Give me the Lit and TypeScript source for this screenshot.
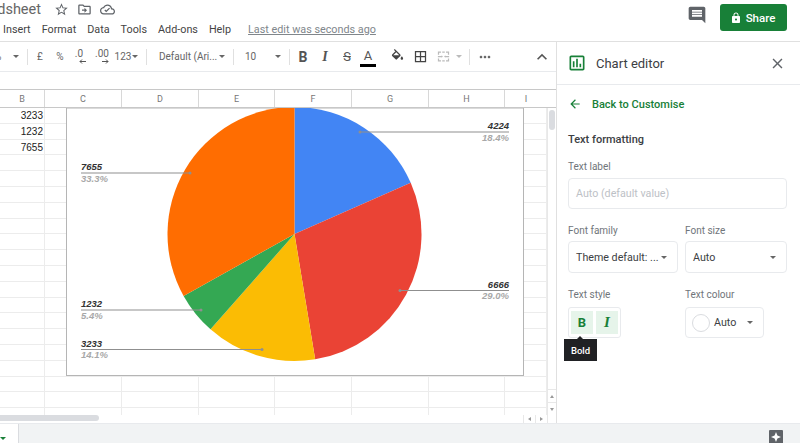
import { LitElement, css, html, svg } from "lit";
import { customElement } from "lit/decorators.js";

const COLUMNS: Array<[string, number]> = [
  ["B", 45],
  ["C", 77],
  ["D", 77],
  ["E", 76],
  ["F", 77],
  ["G", 77],
  ["H", 76],
  ["I", 42],
];

const VALUES = ["3233", "1232", "7655"];
const ROW_COUNT = 20;

const icon = (d: string, size: number, color: string) => html`<svg
  width=${size}
  height=${size}
  viewBox="0 0 24 24"
  fill=${color}
>
  <path d=${d}></path>
</svg>`;

const ICONS = {
  star: "M22 9.24l-7.19-.62L12 2 9.19 8.63 2 9.24l5.46 4.73L5.82 21 12 17.27 18.18 21l-1.63-7.03L22 9.24zM12 15.4l-3.76 2.27 1-4.28-3.32-2.88 4.38-.38L12 6.1l1.71 4.04 4.38.38-3.32 2.88 1 4.28L12 15.4z",
  folder:
    "M20 6h-8l-2-2H4c-1.1 0-2 .9-2 2v12c0 1.1.9 2 2 2h16c1.1 0 2-.9 2-2V8c0-1.1-.9-2-2-2zm0 12H4V6h5.17l2 2H20v10zm-8-1l4-4-4-4v3H8v2h4v3z",
  cloud:
    "M19.35 10.04C18.67 6.59 15.64 4 12 4 9.11 4 6.6 5.64 5.35 8.04 2.34 8.36 0 10.91 0 14c0 3.31 2.69 6 6 6h13c2.76 0 5-2.24 5-5 0-2.64-2.05-4.78-4.65-4.96zM19 18H6c-2.21 0-4-1.79-4-4 0-2.05 1.53-3.76 3.56-3.97l1.07-.11.5-.95C8.08 7.14 9.94 6 12 6c2.62 0 4.88 1.86 5.39 4.43l.3 1.5 1.53.11c1.56.1 2.78 1.41 2.78 2.96 0 1.65-1.35 3-3 3zm-9-1.5l-3-3 1.4-1.4 1.6 1.6 4.6-4.6 1.4 1.4z",
  comment:
    "M20 2H4c-1.1 0-2 .9-2 2v12c0 1.1.9 2 2 2h14l4 4V4c0-1.1-.9-2-2-2zm-2 12H6v-2h12v2zm0-3H6V9h12v2zm0-3H6V6h12v2z",
  lock: "M18 8h-1V6c0-2.76-2.24-5-5-5S7 3.24 7 6v2H6c-1.1 0-2 .9-2 2v10c0 1.1.9 2 2 2h12c1.1 0 2-.9 2-2V10c0-1.1-.9-2-2-2zm-6 9c-1.1 0-2-.9-2-2s.9-2 2-2 2 .9 2 2-.9 2-2 2zm3.1-9H8.9V6c0-1.71 1.39-3.1 3.1-3.1 1.71 0 3.1 1.39 3.1 3.1v2z",
  back: "M20 11H7.83l5.59-5.59L12 4l-8 8 8 8 1.41-1.41L7.83 13H20v-2z",
  close:
    "M19 6.41L17.59 5 12 10.59 6.41 5 5 6.41 10.59 12 5 17.59 6.41 19 12 13.41 17.59 19 19 17.59 13.41 12z",
  chevron: "M7.41 15.41L12 10.83l4.59 4.58L18 14l-6-6-6 6z",
  fill: "M16.56 8.94L7.62 0 6.21 1.41l2.38 2.38-5.15 5.15c-.59.59-.59 1.54 0 2.12l5.5 5.5c.29.29.68.44 1.06.44s.77-.15 1.06-.44l5.5-5.5c.59-.58.59-1.53 0-2.12zM5.21 10L10 5.21 14.79 10H5.21zM19 11.5s-2 2.17-2 3.5c0 1.1.9 2 2 2s2-.9 2-2c0-1.33-2-3.5-2-3.5z",
  borders:
    "M3 3v18h18V3H3zm8 16H5v-6h6v6zm0-8H5V5h6v6zm8 8h-6v-6h6v6zm0-8h-6V5h6v6z",
  merge:
    "M3 4h5v2H5v3H3zM10 4h4v2h-4zM16 4h5v5h-2V6h-3zM3 15h2v3h3v2H3zM10 18h4v2h-4zM19 15h2v5h-5v-2h3zM3 11h6v-1l2 2-2 2v-1H3zM21 11h-6v-1l-2 2 2 2v-1h6z",
  more: "M6 10c-1.1 0-2 .9-2 2s.9 2 2 2 2-.9 2-2-.9-2-2-2zm12 0c-1.1 0-2 .9-2 2s.9 2 2 2 2-.9 2-2-.9-2-2-2zm-6 0c-1.1 0-2 .9-2 2s.9 2 2 2 2-.9 2-2-.9-2-2-2z",
  chart:
    "M19 3H5c-1.1 0-2 .9-2 2v14c0 1.1.9 2 2 2h14c1.1 0 2-.9 2-2V5c0-1.1-.9-2-2-2zm0 16H5V5h14v14zM7 10h2v7H7zm4-3h2v10h-2zm4 6h2v4h-2z",
};

const CX = 294.5;
const CY = 234;
const R = 127;

const SLICES: Array<[number, number, string]> = [
  [0, 18.4, "#4285f4"],
  [18.4, 47.4, "#ea4335"],
  [47.4, 61.5, "#fbbc04"],
  [61.5, 66.9, "#34a853"],
  [66.9, 100, "#ff6d01"],
];

// value, percent, line y, line x start, line x end, right aligned
const LABELS: Array<[string, string, number, number, number, boolean]> = [
  ["4224", "18.4%", 132, 360, 509, true],
  ["6666", "29.0%", 290.5, 400, 509, true],
  ["7655", "33.3%", 173, 81, 190, false],
  ["1232", "5.4%", 310, 81, 201, false],
  ["3233", "14.1%", 349.5, 81, 262, false],
];

function slicePath(from: number, to: number) {
  const point = (pct: number) => {
    const a = (pct / 100) * Math.PI * 2;
    return `${CX + R * Math.sin(a)} ${CY - R * Math.cos(a)}`;
  };
  const large = to - from > 50 ? 1 : 0;
  return `M${CX} ${CY}L${point(from)}A${R} ${R} 0 ${large} 1 ${point(to)}Z`;
}

// little arrow under the decimal buttons
const decArrow = (d: string) => html`<svg class="mini" width="7" height="5" viewBox="0 0 7 5">
  <path d=${d} fill="none" stroke="#555" stroke-width="1"></path>
</svg>`;

@customElement("app-root")
export class AppRoot extends LitElement {
  private renderHeader() {
    return html`<header class="top">
      <div class="doc">
        <div class="title-row">
          <div class="title"><span>Untitled spreadsheet</span></div>
          <div class="title-icons">
            ${icon(ICONS.star, 15, "#5f6368")} ${icon(ICONS.folder, 15, "#5f6368")}
            ${icon(ICONS.cloud, 15, "#5f6368")}
          </div>
        </div>
        <nav class="menu">
          <span>Insert</span><span>Format</span><span>Data</span><span>Tools</span
          ><span>Add-ons</span><span>Help</span>
          <span class="last-edit">Last edit was seconds ago</span>
        </nav>
      </div>
      <div class="actions">
        <span class="comment">${icon(ICONS.comment, 20, "#5f6368")}</span>
        <button class="share">${icon(ICONS.lock, 12, "#fff")} Share</button>
      </div>
    </header>`;
  }

  private renderToolbar() {
    return html`<div class="toolbar">
      <span class="t pct-cut">%</span>
      <i class="caret"></i>
      <i class="sep s1"></i>
      <span class="t w24">£</span>
      <span class="t w16">%</span>
      <span class="t dec w22">.0${decArrow("M7 2.5H1M3 .5L1 2.5L3 4.5")}</span>
      <span class="t dec w24">.00${decArrow("M0 2.5H6M4 .5L6 2.5L4 4.5")}</span>
      <span class="t w18">123</span>
      <i class="caret tight"></i>
      <i class="sep s2"></i>
      <span class="t font">Default (Ari...</span>
      <i class="caret"></i>
      <i class="sep s3"></i>
      <span class="t size">10</span>
      <i class="caret far"></i>
      <i class="sep s3"></i>
      <span class="t b">B</span>
      <span class="t it">I</span>
      <span class="t st">S</span>
      <span class="t a">A</span>
      <span class="tool fill">${icon(ICONS.fill, 15, "#444")}</span>
      <span class="tool">${icon(ICONS.borders, 15, "#444")}</span>
      <span class="tool">${icon(ICONS.merge, 15, "#bbb")}</span>
      <i class="caret light"></i>
      <i class="sep s4"></i>
      <span class="tool more">${icon(ICONS.more, 16, "#666")}</span>
      <span class="tool chev">${icon(ICONS.chevron, 20, "#555")}</span>
    </div>`;
  }

  private renderGrid() {
    const rows = Array.from({ length: ROW_COUNT }, (_, i) => i);
    return html`<div class="grid">
      ${rows.map(
        (r) => html`<div class="row">
          ${COLUMNS.map(
            ([name, w]) => html`<div class="cell" style="width:${w}px">
              ${name === "B" ? VALUES[r] ?? "" : ""}
            </div>`
          )}
        </div>`
      )}
    </div>`;
  }

  private renderChart() {
    // svg uses the page's coordinates, shifted by the chart box origin
    return html`<svg class="chart" width="458" height="268" viewBox="66 108 458 268">
      <rect x="66.5" y="108" width="457" height="267.5" fill="#fff" stroke="#b5b5b5"></rect>
      ${SLICES.map(
        ([from, to, color]) => svg`<path d=${slicePath(from, to)} fill=${color}></path>`
      )}
      ${LABELS.map(([value, pct, y, x1, x2, right]) => {
        const tx = right ? x2 : x1;
        const anchor = right ? "end" : "start";
        const dotX = right ? x1 : x2;
        return svg`<line x1=${x1} y1=${y} x2=${x2} y2=${y} stroke="#8f8f8f" stroke-width="1"></line>
          <circle cx=${dotX} cy=${y} r="1.5" fill="#8f8f8f"></circle>
          <text class="val" x=${tx} y=${y - 3} text-anchor=${anchor}>${value}</text>
          <text class="pct" x=${tx} y=${y + 8.5} text-anchor=${anchor}>${pct}</text>`;
      })}
    </svg>`;
  }

  private renderPanel() {
    return html`<aside class="panel">
      <div class="panel-head">
        ${icon(ICONS.chart, 20, "#188038")}
        <span class="panel-title">Chart editor</span>
        <span class="panel-close">${icon(ICONS.close, 17, "#5f6368")}</span>
      </div>
      <div class="panel-body">
        <div class="back">
          ${icon(ICONS.back, 14, "#188038")}
          <span>Back to Customise</span>
        </div>
        <h3>Text formatting</h3>
        <label>Text label</label>
        <div class="input placeholder">Auto (default value)</div>
        <div class="two font-row">
          <div class="col family">
            <label>Font family</label>
            <div class="input select"><span>Theme default: ...</span><i class="caret"></i></div>
          </div>
          <div class="col fsize">
            <label>Font size</label>
            <div class="input select"><span>Auto</span><i class="caret"></i></div>
          </div>
        </div>
        <div class="two style-row">
          <div class="col family">
            <label>Text style</label>
            <div class="btn-group">
              <span class="style-btn bold">B</span>
              <span class="style-btn italic">I</span>
              <div class="tooltip">Bold</div>
            </div>
          </div>
          <div class="col fsize">
            <label>Text colour</label>
            <div class="input colour">
              <i class="swatch"></i><span>Auto</span><i class="caret"></i>
            </div>
          </div>
        </div>
      </div>
    </aside>`;
  }

  render() {
    return html`${this.renderHeader()} ${this.renderMain()}
      <footer class="bottom">
        <div class="tab"><i class="tab-caret"></i></div>
        <span class="explore"
          ><svg width="10" height="10" viewBox="0 0 10 10" fill="#fff">
            <path d="M5 0L6.4 3.6 10 5 6.4 6.4 5 10 3.6 6.4 0 5 3.6 3.6z"></path></svg
        ></span>
      </footer>`;
  }

  private renderMain() {
    return html`<div class="main">
      <div class="sheet">
        ${this.renderToolbar()}
        <div class="formula"></div>
        <div class="col-heads">
          ${COLUMNS.map(
            ([name, w]) => html`<div class="col-head" style="width:${w}px">${name}</div>`
          )}
        </div>
        <div class="grid-wrap">
          ${this.renderGrid()}
          <div class="vscroll">
            <i class="vthumb"></i>
            <span class="vbtn up"></span>
            <span class="vbtn down"></span>
          </div>
          ${this.renderChart()}
        </div>
        <div class="hscroll">
          <i class="hthumb"></i>
          <span class="hbtn left"></span>
          <span class="hbtn right"></span>
          <span class="hcorner"></span>
        </div>
      </div>
      ${this.renderPanel()}
    </div>`;
  }

  public static override styles = css`
    :host {
      display: flex;
      flex-direction: column;
      width: 800px;
      height: 443px;
      overflow: hidden;
      background: #fff;
      font-family: Roboto, "Liberation Sans", sans-serif;
      color: #3c4043;
    }

    .top {
      height: 41px;
      display: flex;
      justify-content: space-between;
      flex: none;
    }
    .title-row {
      display: flex;
      align-items: center;
      height: 19px;
    }
    .title {
      width: 41px;
      overflow: hidden;
      display: flex;
      justify-content: flex-end;
      white-space: nowrap;
      font-size: 14.5px;
      color: #666;
    }
    .title span {
      flex: none;
    }
    .title-icons {
      display: flex;
      gap: 8px;
      margin-left: 13px;
    }
    .menu {
      display: flex;
      gap: 11px;
      padding-left: 3px;
      font-size: 10.8px;
      color: #444;
      height: 21px;
      align-items: center;
    }
    .last-edit {
      margin-left: 6px;
      color: #80868b;
      text-decoration: underline;
    }
    .actions {
      display: flex;
      align-items: flex-start;
      gap: 13px;
      padding: 4px 13px 0 0;
    }
    .comment {
      display: block;
      margin-top: 1px;
    }
    .share {
      width: 67px;
      height: 27px;
      background: #188038;
      color: #fff;
      border: 0;
      border-radius: 3px;
      display: flex;
      align-items: center;
      justify-content: center;
      gap: 4px;
      font: 500 11.5px Roboto, sans-serif;
      padding: 0 2px 0 0;
    }

    .main {
      flex: 1;
      min-height: 0;
      display: flex;
      border-top: 1px solid #e0e0e0;
    }
    .sheet {
      width: 556px;
      display: flex;
      flex-direction: column;
      flex: none;
      position: relative;
    }

    .toolbar {
      height: 30px;
      box-sizing: border-box;
      flex: none;
      display: flex;
      align-items: center;
      border-bottom: 1px solid #e8eaed;
      font-size: 10px;
      color: #666;
      white-space: nowrap;
      overflow: hidden;
    }
    .t {
      display: flex;
      align-items: center;
      justify-content: center;
      flex: none;
      position: relative;
    }
    .pct-cut {
      width: 17px;
      margin-left: -6px;
      justify-content: flex-start;
    }
    .w16 {
      width: 16px;
    }
    .w18 {
      width: 18px;
    }
    .w22 {
      width: 22px;
    }
    .w24 {
      width: 24px;
    }
    .dec {
      margin-top: -6px;
    }
    .mini {
      position: absolute;
      top: 11px;
      left: 50%;
    }
    .font {
      margin-left: 12px;
      width: 58px;
      justify-content: flex-start;
    }
    .size {
      margin-left: 11px;
      width: 20px;
      justify-content: flex-start;
    }
    .b,
    .it,
    .st,
    .a {
      width: 22px;
      font-size: 13px;
      color: #555;
    }
    .b {
      font-weight: 700;
      font-size: 14px;
      margin-left: 2px;
    }
    .it {
      font-style: italic;
      font-weight: 700;
      font-family: "Liberation Serif", serif;
      font-size: 14px;
    }
    .st {
      text-decoration: line-through;
    }
    .a {
      border-bottom: 3px solid #000;
      width: 16px;
      margin-left: 2px;
      height: 18px;
      line-height: 15px;
    }
    .tool {
      display: flex;
      flex: none;
      width: 23px;
      justify-content: center;
    }
    .fill {
      margin-left: 10px;
    }
    .more {
      margin-left: 3px;
    }
    .chev {
      margin-left: 34px;
    }
    .caret {
      display: block;
      flex: none;
      width: 0;
      height: 0;
      border-left: 3.5px solid transparent;
      border-right: 3.5px solid transparent;
      border-top: 3.5px solid #666;
      margin-left: 2px;
    }
    .caret.tight {
      margin-left: 0;
    }
    .caret.far {
      margin-left: 10px;
    }
    .caret.light {
      border-top-color: #bbb;
      margin-left: 1px;
    }
    .sep {
      display: block;
      flex: none;
      width: 1px;
      height: 16px;
      background: #e0e0e0;
    }
    .s1 {
      margin-left: 8px;
    }
    .s2 {
      margin-left: 8px;
    }
    .s3 {
      margin-left: 8px;
    }
    .s4 {
      margin-left: 7px;
    }

    .formula {
      height: 18px;
      box-sizing: border-box;
      flex: none;
      border-bottom: 1px solid #c8c8c8;
    }
    .col-heads {
      display: flex;
      height: 18px;
      flex: none;
      border-bottom: 1px solid #c8c8c8;
      box-sizing: border-box;
    }
    .col-head {
      flex: none;
      box-sizing: border-box;
      border-right: 1px solid #d8d8d8;
      display: flex;
      align-items: center;
      justify-content: center;
      font-size: 9px;
      color: #777;
    }
    .col-head:last-child {
      border-right: 0;
    }

    .grid-wrap {
      flex: 1;
      min-height: 0;
      display: flex;
      position: relative;
      overflow: hidden;
    }
    .grid {
      width: 547px;
      flex: none;
    }
    .row {
      display: flex;
      height: 15.8px;
      box-sizing: border-box;
      border-bottom: 1px solid #ececec;
    }
    .cell {
      flex: none;
      box-sizing: border-box;
      border-right: 1px solid #ececec;
      text-align: right;
      padding-right: 1px;
      font: 10px/15px "Liberation Sans", sans-serif;
      color: #222;
    }
    .vscroll {
      width: 9px;
      flex: none;
      border-left: 1px solid #e8e8e8;
      display: flex;
      flex-direction: column;
      box-sizing: border-box;
      position: relative;
    }
    .vthumb {
      display: block;
      width: 6px;
      height: 20px;
      margin: 2px 0 0 1px;
      background: #dadce0;
      border-radius: 3px;
    }
    .vbtn {
      display: flex;
      height: 12px;
      align-items: center;
      justify-content: center;
      border-top: 1px solid #e8e8e8;
    }
    .vbtn.up {
      margin-top: auto;
    }
    .vbtn::after {
      content: "";
      border-left: 2.5px solid transparent;
      border-right: 2.5px solid transparent;
    }
    .vbtn.up::after {
      border-bottom: 3px solid #999;
    }
    .vbtn.down::after {
      border-top: 3px solid #999;
    }
    .chart {
      position: absolute;
      left: 66px;
      top: 0;
      display: block;
    }
    .val {
      font: italic 700 9.5px "Liberation Sans", sans-serif;
      fill: #333;
    }
    .pct {
      font: italic 700 9.5px "Liberation Sans", sans-serif;
      fill: #a8a8a8;
    }

    .hscroll {
      height: 8px;
      flex: none;
      display: flex;
      align-items: stretch;
    }
    .hthumb {
      display: block;
      width: 99px;
      height: 6px;
      background: #dadce0;
      border-radius: 0 3px 3px 0;
      margin-right: auto;
    }
    .hbtn {
      width: 12px;
      display: flex;
      align-items: center;
      justify-content: center;
      border-left: 1px solid #e8e8e8;
      box-sizing: border-box;
    }
    .hbtn::after {
      content: "";
      border-top: 2.5px solid transparent;
      border-bottom: 2.5px solid transparent;
    }
    .hbtn.left::after {
      border-right: 3px solid #999;
    }
    .hbtn.right::after {
      border-left: 3px solid #999;
    }
    .hcorner {
      width: 9px;
      box-sizing: border-box;
      border-left: 1px solid #e8e8e8;
    }

    .panel {
      flex: 1;
      display: flex;
      flex-direction: column;
      border-left: 1px solid #e0e0e0;
      box-sizing: border-box;
    }
    .panel-head {
      height: 43px;
      flex: none;
      display: flex;
      align-items: center;
      box-sizing: border-box;
      padding-left: 10px;
      border-bottom: 1px solid #e8eaed;
    }
    .panel-title {
      margin-left: 9px;
      font-size: 13px;
      color: #3c4043;
    }
    .panel-close {
      display: flex;
      margin-left: auto;
      margin-right: 14px;
    }
    .panel-body {
      padding: 12px 13px 0 11px;
    }
    .back {
      display: flex;
      align-items: center;
      font-size: 11px;
      font-weight: 500;
      color: #188038;
      gap: 10px;
      height: 14px;
    }
    h3 {
      margin: 22px 0 0;
      font-size: 11px;
      font-weight: 500;
      color: #3c4043;
      line-height: 14px;
    }
    label {
      display: block;
      font-size: 10px;
      color: #70757a;
      line-height: 12px;
      margin-bottom: 5px;
    }
    h3 + label {
      margin-top: 14px;
    }
    .input {
      box-sizing: border-box;
      border: 1px solid #e8eaed;
      border-radius: 4px;
      font-size: 10.7px;
      color: #3c4043;
      display: flex;
      align-items: center;
      padding: 0 7px;
      height: 31px;
    }
    .placeholder {
      color: #bdc1c6;
    }
    .two {
      display: flex;
      gap: 7px;
      margin-top: 16px;
    }
    .font-row label {
      margin-bottom: 4px;
    }
    .col.family {
      width: 110px;
      position: relative;
    }
    .col.fsize {
      width: 102px;
    }
    .select {
      height: 32px;
      justify-content: space-between;
      white-space: nowrap;
      padding-right: 10px;
    }
    .family .select {
      margin-top: 1px;
    }
    .style-row {
      margin-top: 16px;
    }
    .style-row label {
      margin-bottom: 6px;
    }
    .colour {
      width: 79px;
      padding: 0 6px;
      gap: 4px;
    }
    .colour .caret {
      margin-left: 7px;
    }
    .swatch {
      display: block;
      width: 18px;
      height: 18px;
      border-radius: 50%;
      border: 1px solid #dadce0;
      box-sizing: border-box;
    }
    .btn-group {
      box-sizing: border-box;
      width: 53px;
      height: 31px;
      border: 1px solid #e8eaed;
      border-radius: 3px;
      display: flex;
      gap: 3px;
      padding: 3px 2px;
      position: relative;
    }
    .style-btn {
      flex: 1;
      background: #e6f4ea;
      color: #188038;
      display: flex;
      align-items: center;
      justify-content: center;
      font-size: 13px;
      font-weight: 700;
    }
    .italic {
      font-style: italic;
      font-family: "Liberation Serif", serif;
      font-size: 15px;
    }
    .tooltip {
      position: absolute;
      left: -5px;
      top: 31px;
      width: 33px;
      height: 22px;
      background: #202124;
      color: #fff;
      font-size: 9.5px;
      font-weight: 500;
      display: flex;
      align-items: center;
      justify-content: center;
    }
    .tooltip::before {
      content: "";
      position: absolute;
      left: 13px;
      top: -3px;
      border-left: 3px solid transparent;
      border-right: 3px solid transparent;
      border-bottom: 3px solid #202124;
    }

    .bottom {
      height: 20px;
      flex: none;
      background: #f1f3f4;
      border-top: 1px solid #e8eaed;
      box-sizing: border-box;
      display: flex;
      justify-content: space-between;
      overflow: hidden;
    }
    .tab {
      width: 19px;
      background: #fff;
      border-right: 1px solid #dadce0;
      box-sizing: border-box;
      padding: 13px 0 0 0;
    }
    .tab-caret {
      display: block;
      width: 0;
      border-left: 3px solid transparent;
      border-right: 3px solid transparent;
      border-top: 3px solid #188038;
    }
    .explore {
      width: 14px;
      height: 16px;
      margin: 6px 17px 0 0;
      background: #5f6368;
      display: flex;
      justify-content: center;
      padding-top: 2px;
      box-sizing: border-box;
      border-radius: 1px;
    }
  `;
}
